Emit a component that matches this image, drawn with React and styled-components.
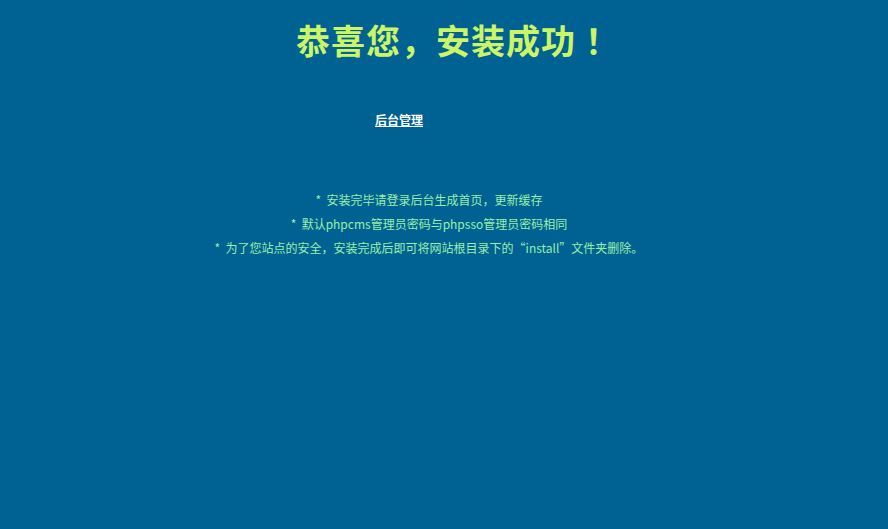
import React from 'react'
import styled, { createGlobalStyle } from 'styled-components'

const Global = createGlobalStyle`
  html, body {
    margin: 0;
    padding: 0;
    background: #006293;
  }
  body {
    font-family: "Noto Sans CJK SC", "Microsoft YaHei", sans-serif;
  }
`;

const Page = styled.div`
  width: 888px;
  height: 529px;
  display: flex;
  flex-direction: column;
  align-items: center;
  background: #006293;
`;

const Title = styled.h1`
  margin: 18px 0 0 28px;
  font-size: 34px;
  line-height: 44px;
  font-weight: bold;
  color: #ccf566;
  letter-spacing: 1px;
`;

const Bang = styled.span`
  margin-left: 9px;
`;

const LinkRow = styled.div`
  margin-top: 49px;
  width: 100%;
  display: flex;
  justify-content: center;
  padding-right: 90px;
  box-sizing: border-box;
`;

const AdminLink = styled.a`
  color: #ffffff;
  font-size: 12px;
  font-weight: bold;
  line-height: 18px;
  text-decoration: underline;
`;

const Notes = styled.ul`
  list-style: none;
  margin: 59px 0 0 0;
  padding: 0 30px 0 0;
  display: flex;
  flex-direction: column;
  align-items: center;
`;

const Note = styled.li`
  font-size: 12px;
  line-height: 24px;
  color: #99f0a8;
  white-space: pre;
`;

const App = () => {
  return (
    <Page>
      <Global />
      <Title>恭喜您，安装成功<Bang>！</Bang></Title>
      <LinkRow>
        <AdminLink href="#">后台管理</AdminLink>
      </LinkRow>
      <Notes>
        <Note>*  安装完毕请登录后台生成首页，更新缓存</Note>
        <Note>*  默认phpcms管理员密码与phpsso管理员密码相同</Note>
        <Note>*  为了您站点的安全，安装完成后即可将网站根目录下的“install”文件夹删除。</Note>
      </Notes>
    </Page>
  )
}

export default App
